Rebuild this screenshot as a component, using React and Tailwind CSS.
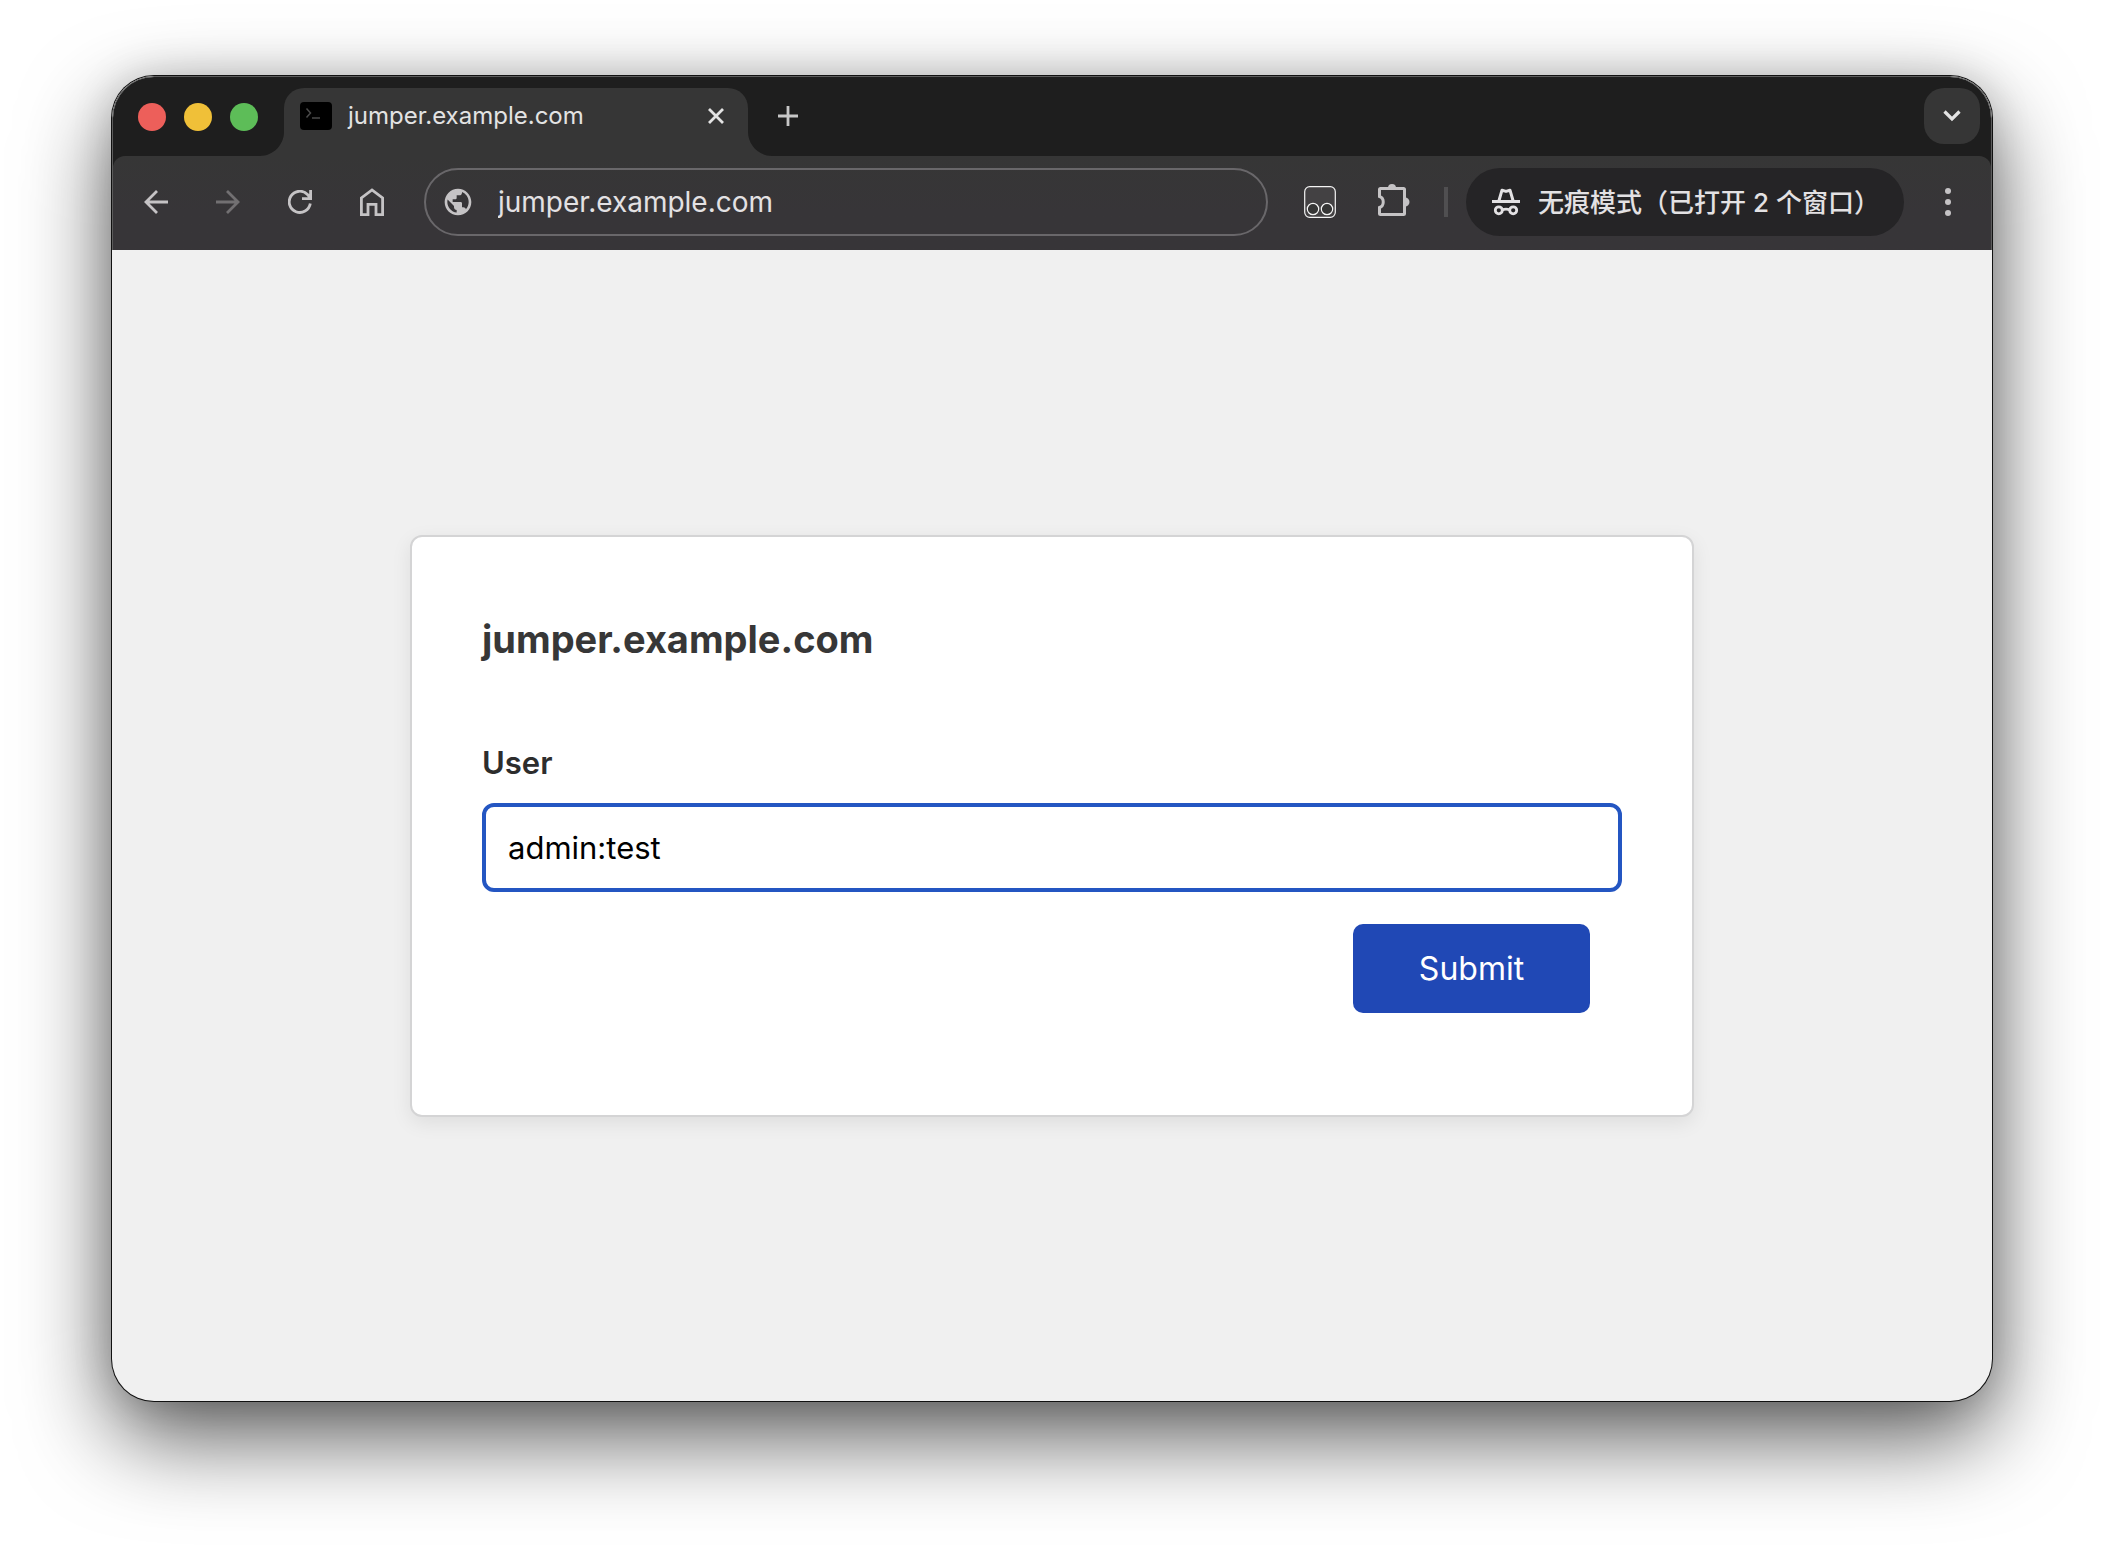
import React from "react";
import { MdPublic } from "react-icons/md";

function Flare({ flip }) {
  return (
    <svg viewBox="0 0 24 24" className={flip ? "size-6 -scale-x-100" : "size-6"} aria-hidden="true">
      <path d="M24 0v24H0C13 24 24 13 24 0Z" fill="#363636" />
    </svg>
  );
}

function ToolButton({ label, children, dim }) {
  return (
    <button
      type="button"
      aria-label={label}
      className={
        dim
          ? "flex size-14 shrink-0 items-center justify-center text-[#727072]"
          : "flex size-14 shrink-0 items-center justify-center text-[#c5c3c5]"
      }
    >
      {children}
    </button>
  );
}

function TabStrip() {
  return (
    <div className="flex h-[79px] items-end bg-[#1e1e1e] pr-[11px]">
      <div className="flex h-full items-center gap-[18px] pl-[25px]">
        <button type="button" aria-label="Close window" className="size-7 rounded-full bg-[#ed5f5a]" />
        <button type="button" aria-label="Minimize window" className="size-7 rounded-full bg-[#f0c038]" />
        <button type="button" aria-label="Zoom window" className="size-7 rounded-full bg-[#5dbd58]" />
      </div>
      <div className="ml-0.5 flex items-end">
        <Flare />
        <div className="flex h-[68px] w-[464px] items-center rounded-t-[20px] bg-[#363636] pr-3 pb-3 pl-4">
          <svg viewBox="0 0 32 28" className="h-7 w-8" aria-hidden="true">
            <rect width="32" height="28" rx="4" fill="#000" />
            <path d="M6.500 6.500l4 4.500-4 4.500M12 16h8" fill="none" stroke="#4a4a4a" strokeWidth="1.500" />
          </svg>
          <span className="ml-4 flex-1 text-2xl text-[#e3e3e3]">jumper.example.com</span>
          <button type="button" aria-label="Close tab" className="flex size-10 items-center justify-center">
            <svg viewBox="0 0 16 16" className="size-4" fill="none" stroke="#e3e3e3" strokeWidth="2.800" aria-hidden="true">
              <path d="M1 1l14 14M15 1L1 15" />
            </svg>
          </button>
        </div>
        <Flare flip />
      </div>
      <button type="button" aria-label="New tab" className="mb-3 -ml-3 flex size-14 items-center justify-center">
        <svg viewBox="0 0 20 20" className="size-5" fill="none" stroke="#c7c7c7" strokeWidth="2.800" aria-hidden="true">
          <path d="M10 0v20M0 10h20" />
        </svg>
      </button>
      <button
        type="button"
        aria-label="Search tabs"
        className="mb-3 ml-auto flex size-14 items-center justify-center rounded-[20px] bg-[#363636]"
      >
        <svg viewBox="0 0 18 12" className="h-3 w-[18px]" fill="none" stroke="#e3e3e3" strokeWidth="3.200" aria-hidden="true">
          <path d="M1.500 1.500L9 9l7.500-7.500" />
        </svg>
      </button>
    </div>
  );
}

function Toolbar() {
  return (
    <div className="bg-[#1e1e1e]">
      <div className="flex h-[94px] items-center rounded-t-xl bg-linear-to-b from-[#363636] to-[#373538] to-60% px-[15px] pb-0.5">
        <div className="flex gap-4">
          <ToolButton label="Back">
            <svg viewBox="0 0 24 24" className="size-6" fill="none" stroke="currentColor" strokeWidth="2.800" aria-hidden="true">
              <path d="M24 12H2M13 1L2 12l11 11" />
            </svg>
          </ToolButton>
          <ToolButton label="Forward" dim>
            <svg viewBox="0 0 24 24" className="size-6" fill="none" stroke="currentColor" strokeWidth="2.800" aria-hidden="true">
              <path d="M0 12h22M11 1l11 11-11 11" />
            </svg>
          </ToolButton>
          <ToolButton label="Reload">
            <svg viewBox="0 0 24 24" className="size-6" fill="none" stroke="currentColor" strokeWidth="2.800" aria-hidden="true">
              <path d="M22.300 13.500A10.600 10.600 0 1 1 19.500 4.500L22.500 8M22.600 0v8.600H14" />
            </svg>
          </ToolButton>
          <ToolButton label="Home">
            <svg viewBox="0 0 24 28" className="h-7 w-6" fill="none" stroke="currentColor" strokeWidth="2.800" aria-hidden="true">
              <path d="M1.400 26.600V10L12 2l10.600 8v16.600H16V16.400H8v10.200z" />
            </svg>
          </ToolButton>
        </div>
        <div className="ml-6 flex h-[68px] flex-1 items-center rounded-full border-2 border-[#69676a] pl-4">
          <MdPublic className="size-8 shrink-0 text-[#c5c3c5]" aria-hidden="true" />
          <input
            aria-label="Address"
            defaultValue="jumper.example.com"
            className="ml-6 min-w-0 flex-1 bg-transparent text-[28px] text-[#e3e1e3] outline-none"
          />
        </div>
        <div className="ml-6 flex items-center gap-4">
          <ToolButton label="Tampermonkey">
            <svg viewBox="0 0 32 32" className="size-8" fill="none" stroke="#f4f4f4" strokeWidth="1.200" aria-hidden="true">
              <rect x="0.700" y="0.700" width="30.600" height="30.600" rx="5" fill="#434143" />
              <circle cx="9" cy="23" r="5.700" fill="#363636" />
              <circle cx="23" cy="23" r="5.700" fill="#363636" />
            </svg>
          </ToolButton>
          <ToolButton label="Extensions">
            <svg viewBox="0 0 36 36" className="size-9" aria-hidden="true">
              <path
                d="M6.500 4.500H29.500q1 0 1 1V29.500q0 1-1 1H6.500q-1 0-1-1V23.500C10.500 22 10.500 14 5.500 12.500V5.500q0-1 1-1z"
                fill="none"
                stroke="currentColor"
                strokeWidth="3"
              />
              <path d="M14 4a4 4 0 0 1 8 0zM31 13.500a4.500 4.500 0 0 1 0 9z" fill="currentColor" />
            </svg>
          </ToolButton>
        </div>
        <div className="ml-6 h-[30px] w-1 bg-[#504f51]" />
        <button
          type="button"
          className="ml-[18px] flex h-[68px] shrink-0 items-center rounded-full bg-[#252426] pr-6 pl-[26px] text-[26px] font-medium whitespace-nowrap text-[#e3e1e3]"
        >
          <svg viewBox="0 0 28 28" className="mr-[18px] size-7" fill="none" stroke="currentColor" aria-hidden="true">
            <path d="M7 12.500L10 2.200l4 1.200 4-1.200 3 10.300" strokeWidth="3" strokeLinejoin="round" />
            <path d="M0 13.500h28" strokeWidth="3.200" />
            <circle cx="6.800" cy="22.300" r="3.500" strokeWidth="2.800" />
            <circle cx="21.200" cy="22.300" r="3.500" strokeWidth="2.800" />
            <path d="M10 22q4-1.800 8 0" strokeWidth="2.600" />
          </svg>
          无痕模式（已打开 2 个窗口）
        </button>
        <div className="ml-4">
          <ToolButton label="Menu">
            <svg viewBox="0 0 6 28" className="h-7 w-1.5" fill="currentColor" aria-hidden="true">
              <circle cx="3" cy="3" r="3" />
              <circle cx="3" cy="14" r="3" />
              <circle cx="3" cy="25" r="3" />
            </svg>
          </ToolButton>
        </div>
      </div>
    </div>
  );
}

function LoginCard() {
  return (
    <form
      onSubmit={(e) => e.preventDefault()}
      className="w-full max-w-[1284px] rounded-xl border-2 border-[#d4d4d5] bg-white px-[70px] pt-[78px] pb-[102px] shadow-[0_6px_20px_rgba(0,0,0,0.08)]"
    >
      <h1 className="text-[38px] leading-12 font-bold text-[#373737]">jumper.example.com</h1>
      <label htmlFor="user" className="mt-20 block text-[31px] leading-10 font-semibold text-[#2d2d2d]">
        User
      </label>
      <input
        id="user"
        defaultValue="admin:test"
        className="mt-5 block h-[89px] w-full rounded-xl border-4 border-[#2456c2] bg-white px-[22px] text-[31px] text-black outline-none"
      />
      <div className="mt-8 flex justify-end pr-8">
        <button type="submit" className="h-[89px] w-[237px] rounded-[10px] bg-[#2048b5] pt-0.5 text-[32px] text-white">
          Submit
        </button>
      </div>
    </form>
  );
}

export default function App() {
  return (
    <div className="flex min-h-screen flex-col bg-white px-28 pt-[76px] pb-[147px] font-['Inter','Noto_Sans_CJK_SC',sans-serif]">
      <div className="flex flex-1 flex-col overflow-hidden rounded-[42px] bg-[#f0f0f0] shadow-[0_0_0_1px_#111,0_36px_90px_rgba(0,0,0,0.65),0_0_40px_rgba(0,0,0,0.15)]">
        <header className="overflow-hidden rounded-t-[42px] border-x border-t border-[#5c5c5c]">
          <TabStrip />
          <Toolbar />
        </header>
        <main className="flex flex-1 items-center justify-center">
          <LoginCard />
        </main>
      </div>
    </div>
  );
}
